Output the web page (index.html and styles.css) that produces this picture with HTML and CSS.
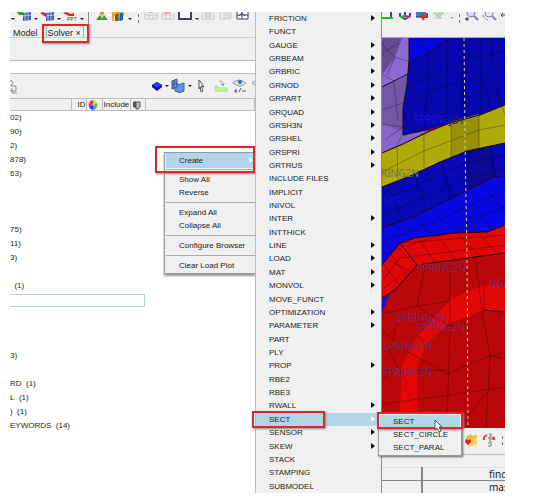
FILE: index.html
```html
<!DOCTYPE html>
<html lang="en">
<head>
    <meta charset="UTF-8">
    <meta name="viewport" content="width=device-width, initial-scale=1.0">
    <title>Solver Browser</title>
    <link rel="stylesheet" href="styles.css">
</head>
<body>
    <div class="app">
        <!-- Solver browser -->
        <div class="browser">
            <div class="toolbar main-toolbar">
                <span class="caret"></span>
                <button class="tool" aria-label="Import"><svg width="15" height="13" viewBox="0 0 15 13"><path d="M0 0h6v3H2z" fill="#24a624"/><path d="M6 1l8-1v8l-8 1z" fill="#4656a8"/><path d="M8 1v8M11 0v8M6 4l8-1" stroke="#b8c2ea" stroke-width="1"/></svg></button>
                <span class="caret"></span>
                <button class="tool" aria-label="Export"><svg width="15" height="13" viewBox="0 0 15 13"><path d="M0 1l3-1 4 2-1 3z" fill="#dd2525"/><path d="M6 1l8-1v8l-8 1z" fill="#4656a8"/><path d="M8 1v8M11 0v8M6 4l8-1" stroke="#b8c2ea" stroke-width="1"/></svg></button>
                <span class="caret"></span>
                <button class="tool" aria-label="Export PPT"><svg width="15" height="13" viewBox="0 0 15 13"><path d="M0 1l3-1 5 2 3-1v3L6 4z" fill="#dd2525"/><text x="4" y="9" class="ppt">PPT</text></svg></button>
                <span class="caret"></span>
                <span class="divider"></span>
                <button class="tool user" aria-label="User profiles"><svg width="15" height="13" viewBox="0 0 15 13"><path d="M2 8l4-5h4l4 5z" fill="#2f9a48"/><circle cx="8" cy="1" r="2" fill="#c98b3a"/><path d="M6 3l2 4 2-4z" fill="#e6d37a"/></svg></button>
                <button class="tool" aria-label="Library"><svg width="15" height="13" viewBox="0 0 15 13"><path d="M1 0h12v4H3v5H1z" fill="#eea72b"/><path d="M4 9V3l3-2v8z" fill="#c5331e"/><path d="M7 9V2h2v7z" fill="#53b847"/><path d="M9 9V1h3v7z" fill="#2c59c9"/></svg></button>
                <span class="caret"></span>
                <span class="grip"></span>
                <button class="tool" aria-label="New page"><svg width="15" height="13" viewBox="0 0 15 13"><path d="M1 0v7h12V0M1 3h12M5 3v4M9 3v4" fill="none" stroke="#c5c8c5"/><path d="M4 0h5" stroke="#a9c0a0" stroke-width="2"/></svg></button>
                <button class="tool" aria-label="Delete page"><svg width="15" height="13" viewBox="0 0 15 13"><path d="M1 0v7h12V0M1 3h12M5 3v4M9 3v4" fill="none" stroke="#cdc9ce"/><path d="M3 1h7" stroke="#efaaa6" stroke-width="2"/></svg></button>
                <button class="tool" aria-label="Page layout"><svg width="15" height="13" viewBox="0 0 15 13"><path d="M1 0v7h12V0" fill="#fff" stroke="#41415f" stroke-width="2"/></svg></button>
                <span class="caret"></span>
                <button class="tool" aria-label="Previous page"><svg width="15" height="13" viewBox="0 0 15 13"><path d="M1 0v7h12V0M4 1h6v4H4zM6 1v4M8 1v4" fill="none" stroke="#c2c5d0"/></svg></button>
                <button class="tool" aria-label="Next page"><svg width="15" height="13" viewBox="0 0 15 13"><path d="M2 0v7h11V0M6 1h5v5H6zM6 3h5" fill="none" stroke="#c8c9cf"/></svg></button>
                <button class="tool" aria-label="Swap windows"><svg width="15" height="13" viewBox="0 0 15 13"><path d="M2 0v7h11V0M7 0v7M2 3h11" fill="#fff" stroke="#3d3d5c" stroke-width="1"/><path d="M4 4l3-3 3 3" fill="none" stroke="#3d3d5c" stroke-width="1"/></svg></button>
            </div>
            <div class="tabs">
                <button class="tab">Model</button>
                <button class="tab active">Solver <span>×</span></button>
            </div>
            <div class="filter"></div>
            <div class="toolbar browser-toolbar">
                <button class="tool sort" aria-label="Sort"><svg width="10" height="18" viewBox="0 0 10 18"><path d="M0 4h2l1 2-3 3M1 9h5v5H2v-3M0 13l3 3h4" fill="none" stroke="#8b96a2"/></svg></button>
                <button class="tool" aria-label="Elements"><svg width="12" height="18" viewBox="0 0 12 18"><path d="M1 8l5-3 5 3v2l-5 4-5-4z" fill="#0808b0"/><path d="M1 8l5-3 5 3-5 3z" fill="#3434e8"/></svg></button>
                <span class="caret"></span>
                <button class="tool" aria-label="Surfaces"><svg width="15" height="18" viewBox="0 0 15 18"><path d="M4 6q4 3 9 0v8q-4 3-9 0z" fill="#5c97e8" stroke="#2860a8"/><path d="M1 4l5-2v8l-5 2z" fill="#7790cf" stroke="#3a4c8c"/><path d="M1 8l5-2M3 3v8" stroke="#3a4c8c"/></svg></button>
                <span class="caret"></span>
                <button class="tool pointer" aria-label="Select"><svg width="10" height="18" viewBox="0 0 10 18"><path d="M2 3l5 7-3-1 2 5-2 1-1-5-1 2z" fill="#fff" stroke="#555"/></svg></button>
                <button class="tool" aria-label="Isolate"><svg width="14" height="18" viewBox="0 0 14 18"><path d="M1 14V9h2l1 2h9v3z" fill="#f5f03e" stroke="#7cdde2"/><path d="M5 4q4 0 4 5M7 7l2 2 1-3" fill="none" stroke="#a39494"/></svg></button>
                <button class="tool" aria-label="Show or hide"><svg width="15" height="18" viewBox="0 0 15 18"><path d="M1 6q6-6 13 0-6 6-13 0z" fill="#dde3e9" stroke="#8c96a0"/><circle cx="8" cy="5" r="2" fill="#47678a"/><path d="M2 14h3M4 12v4M7 15l2-4M10 14h4" stroke="#555"/></svg></button>
                <button class="tool" aria-label="Show"><svg width="15" height="18" viewBox="0 0 15 18"><path d="M1 6q6-6 13 0-6 6-13 0z" fill="#dde3e9" stroke="#8c96a0"/><circle cx="7" cy="5" r="2" fill="#47678a"/></svg></button>
            </div>
            <table class="tree">
                <colgroup>
                    <col class="col-name"><col class="col-id"><col class="col-color"><col class="col-include"><col class="col-card"><col>
                </colgroup>
                <thead>
                    <tr>
                        <th></th>
                        <th class="id">ID</th>
                        <th aria-label="Color"><svg width="10" height="10" viewBox="0 0 10 10"><path d="M5 5V0a5 5 0 0 1 4 3z" fill="#f4d71c"/><path d="M5 5l4-2a5 5 0 0 1 0 4z" fill="#54d12e"/><path d="M5 5l4 2a5 5 0 0 1-4 3z" fill="#1fb6d5"/><path d="M5 5v5a5 5 0 0 1-4-3z" fill="#2135d8"/><path d="M5 5L1 7a5 5 0 0 1 0-4z" fill="#b92bcb"/><path d="M5 5L1 3a5 5 0 0 1 4-3z" fill="#ee3a2a"/></svg></th>
                        <th>Include</th>
                        <th aria-label="Card image"><svg width="9" height="10" viewBox="0 0 9 10"><path d="M1 2l3-1v7L1 7z" fill="#555"/><path d="M4 2h4v5L6 9H4z" fill="#bbb" stroke="#555"/></svg></th>
                        <th></th>
                    </tr>
                </thead>
                <tbody>
                    <tr><td>02)</td></tr>
                    <tr><td>90)</td></tr>
                    <tr><td>2)</td></tr>
                    <tr><td>878)</td></tr>
                    <tr><td>63)</td></tr>
                    <tr><td></td></tr>
                    <tr><td></td></tr>
                    <tr><td></td></tr>
                    <tr><td>75)</td></tr>
                    <tr><td>11)</td></tr>
                    <tr><td>3)</td></tr>
                    <tr><td></td></tr>
                    <tr><td>&nbsp;&nbsp;(1)</td></tr>
                    <tr><td colspan="5"><input class="rename" type="text" aria-label="Name"></td></tr>
                    <tr><td></td></tr>
                    <tr><td></td></tr>
                    <tr><td></td></tr>
                    <tr><td>3)</td></tr>
                    <tr><td></td></tr>
                    <tr><td>RD&nbsp; (1)</td></tr>
                    <tr><td>L&nbsp; (1)</td></tr>
                    <tr><td>)&nbsp; (1)</td></tr>
                    <tr><td>EYWORDS&nbsp; (14)</td></tr>
                </tbody>
            </table>

            <!-- Right click menu -->
            <div class="context-menu">
                <div class="group"><button class="selected more">Create</button></div>
                <div class="group"><button>Show All</button><button>Reverse</button></div>
                <div class="group"><button>Expand All</button><button>Collapse All</button></div>
                <div class="group"><button>Configure Browser</button></div>
                <div class="group"><button>Clear Load Plot</button></div>
            </div>
            <div class="mark mark-tab"></div>
            <div class="mark mark-create"></div>
        </div>

        <!-- Create menu -->
        <ul class="create-menu">
            <li><button class="more">FRICTION</button></li>
            <li><button>FUNCT</button></li>
            <li><button class="more">GAUGE</button></li>
            <li><button class="more">GRBEAM</button></li>
            <li><button class="more">GRBRIC</button></li>
            <li><button class="more">GRNOD</button></li>
            <li><button class="more">GRPART</button></li>
            <li><button class="more">GRQUAD</button></li>
            <li><button class="more">GRSH3N</button></li>
            <li><button class="more">GRSHEL</button></li>
            <li><button class="more">GRSPRI</button></li>
            <li><button class="more">GRTRUS</button></li>
            <li><button>INCLUDE FILES</button></li>
            <li><button>IMPLICIT</button></li>
            <li><button>INIVOL</button></li>
            <li><button class="more">INTER</button></li>
            <li><button>INTTHICK</button></li>
            <li><button class="more">LINE</button></li>
            <li><button class="more">LOAD</button></li>
            <li><button class="more">MAT</button></li>
            <li><button class="more">MONVOL</button></li>
            <li><button>MOVE_FUNCT</button></li>
            <li><button class="more">OPTIMIZATION</button></li>
            <li><button class="more">PARAMETER</button></li>
            <li><button>PART</button></li>
            <li><button>PLY</button></li>
            <li><button class="more">PROP</button></li>
            <li><button>RBE2</button></li>
            <li><button>RBE3</button></li>
            <li><button class="more">RWALL</button></li>
            <li>
                <button class="more selected">SECT</button>
                <div class="mark mark-sect"></div>
                <div class="submenu">
                    <button class="selected">SECT</button>
                    <button>SECT_CIRCLE</button>
                    <button>SECT_PARAL</button>
                    <div class="mark mark-sub"></div>
                    <svg class="cursor" width="10" height="14" viewBox="0 0 10 14"><path d="M1 1v10l2-2 2 4 2-1-2-4h3z" fill="#fff" stroke="#555"/></svg>
                </div>
            </li>
            <li><button class="more">SENSOR</button></li>
            <li><button class="more">SKEW</button></li>
            <li><button>STACK</button></li>
            <li><button>STAMPING</button></li>
            <li><button>SUBMODEL</button></li>
        </ul>

        <!-- Graphics area -->
        <div class="graphics">
            <div class="toolbar view-toolbar">
                <button class="tool" aria-label="Fit"><svg width="13" height="13" viewBox="0 0 13 13"><path d="M9 0v6" stroke="#3b3bc4" stroke-width="2"/><path d="M0 6h11" stroke="#20b820" stroke-width="2"/></svg></button>
                <button class="tool" aria-label="Axes"><svg width="14" height="13" viewBox="0 0 14 13"><path d="M7 0v4M2 1v3l5 3 5-3V1" fill="none" stroke="#4040bc" stroke-width="2"/><path d="M7 4L2 5" stroke="#2cb32c" stroke-width="2"/><path d="M7 4l5 1" stroke="#d53434" stroke-width="2"/></svg></button>
                <button class="tool" aria-label="Capture"><svg width="14" height="13" viewBox="0 0 14 13"><path d="M1 0h10v5H1z" fill="#3a7cc2"/><path d="M1 5h9" stroke="#263f66"/><path d="M12 1v4H7l2-2M7 5l2 3" fill="none" stroke="#e02626" stroke-width="2"/></svg></button>
                <button class="tool" aria-label="Record"><svg width="14" height="13" viewBox="0 0 14 13"><path d="M1 0h11v3H1z" fill="#cdd3cd"/><path d="M4 2h5v5H4z" fill="#b4d3b4"/><path d="M1 6h10" stroke="#ccc"/></svg></button>
                <span class="caret faint"></span>
                <span class="grip"></span>
                <button class="tool" aria-label="Zoom"><svg width="15" height="13" viewBox="0 0 15 13"><circle cx="7" cy="1" r="4" fill="#d5dcf4" stroke="#7d7ca8"/><path d="M10 4l4 4" stroke="#7d7ca8" stroke-width="2"/><path d="M1 7h4M3 5v4" stroke="#333"/></svg></button>
                <button class="tool" aria-label="Zoom area"><svg width="15" height="13" viewBox="0 0 15 13"><circle cx="7" cy="1" r="4" fill="#e3e6f0" stroke="#8986aa"/><path d="M10 4l4 4" stroke="#8986aa" stroke-width="2"/><path d="M1 3q1 4 5 5" fill="none" stroke="#777" stroke-dasharray="2 1"/></svg></button>
                <button class="tool" aria-label="Pan"><svg width="15" height="13" viewBox="0 0 15 13"><path d="M1 3h13M7 0v8M3 1L1 3l2 2M5 6l2 2 2-2" fill="none" stroke="#45457e" stroke-width="1"/></svg></button>
            </div>
            <svg class="model" viewBox="382 38 123 390" preserveAspectRatio="xMinYMin slice">
                <rect x="382" y="38" width="123" height="390" fill="#b90707"/>
                <!-- purple part -->
                <path d="M382 38h28l-1 22-2 25-4 22v27l29-6-29 16-21 9z" fill="#7458a8"/>
                <path d="M402 38h8l-1 22v15l-27 12V74l12-15z" fill="#8d68ce"/>
                <path d="M382 38h20l-8 21-12 15z" fill="#674a92"/>
                <path d="M382 124l21 8v4l25-5-25 12-21 9z" fill="#8a66c8"/>
                <!-- upper blue part -->
                <path d="M409 38h96v67l-25 10-30 8-20 6-27 6v-27l4-23 2-25z" fill="#0707ad"/>
                <path d="M409 38h41l-21 15-20 9z" fill="#0505df"/>
                <!-- yellow part -->
                <path d="M382 153l21-9 27-13 20-8 30-8 25-10v38l-38 8-27 11-30 14-28 11z" fill="#afa909"/>
                <path d="M451 122l28-8v34l-12 3-16 7z" fill="#979008"/>
                <!-- middle blue parts -->
                <path d="M382 187l28-11 30-14 27-11 38-8v32l-10 1-30 15-50 25-33 12z" fill="#0808b4"/>
                <path d="M467 151l24-5 4 30-28 15z" fill="#0a0a96"/>
                <path d="M382 228l33-12 50-25 30-15h10v50l-18 6-32 1-40 5-15 5-18 22z" fill="#0808e2"/>
                <!-- red parts -->
                <path d="M382 265l18-22 15-5 40-5 32-1 18-7v28l-30 4-58 8-22 25-13 8z" fill="#e00707"/>
                <path d="M382 299l8-5-8 18z" fill="#1010c8"/>
                <path d="M505 285h-22l-33 15-32 35-16 30-3 63h18v-58l8-25 22-20 36-15 22 2z" fill="#e20808"/>
                <!-- mesh outlines -->
                <g class="edges">
                    <path d="M409 38v22l-2 25-4 22v28l27-6M409 62l20-9 21-14M382 87l26-13M382 153l21-9 27-13 20-8 30-8 25-10M382 187l28-11 30-14 27-11 38-8M382 228l33-12 50-25 30-15h10M382 265l18-22 15-5 40-5 32-1 18-7M505 253l-30 4-58 8-22 25-13 8M505 312l-22-2M400 243l17 22"/>
                </g>
                <g class="mesh">
                    <path d="M382 43l5 7 12-7M387 50l8 7 13 4M382 55l5-5M395 57l-8 18M382 74l12 7M394 82l4 39M382 110l21-7M382 124l21 3M385 140l18-13M397 146l6-14"/>
                    <path d="M429 53l-1 25-3 50M447 38v85M463 38v23l-2 58M481 38v76M429 53l-10-15M409 87l54-26 42-10M407 105l22-14 34-10 42-13M484 82l7 28M491 38v30M494 85l11 30"/>
                    <path d="M397 147l1 33M424 134v34M451 123v36M479 115v33M382 172l42-21 55-21 26-5"/>
                    <path d="M388 185l14 36M414 174l13 36M442 161l8 37M467 151l3 39M491 146l4 30M382 200l32-14 53-23 38-8M382 215l32-13 53-24 38-9"/>
                    <path d="M393 224l19 15M412 217l24 20M430 208l25 25M449 199l26 33M465 191l27 39M482 183l23 30M382 242l44-17 79-35M382 254l62-20 61-28M495 176l10 8"/>
                    <path d="M418 238l17 24M438 235l18 25M457 233l22 23M478 232l18 21M400 243l105-8M387 259l22 12M391 254l16 23M384 265l16 21M382 281l18-23 105-13M382 289l24-17"/>
                    <path d="M425 264l-8 42-35 8M450 261v66l-3 101M475 257l7 53 8 46-4 72M382 330l26 22 40 22 30-14 27-8M417 306l33-5M417 306l33 20M398 323l-9 28 18 32M382 380l15-12M382 404l67-9 56-8M489 355l16 4M487 392l-25 32M417 370h31M399 412h18M484 285v25M418 335l7 10"/>
                </g>
                <g class="labels">
                    <text x="414" y="123" fill="#1717d5">SPRING</text>
                    <text x="449" y="124" fill="#24206d">JDY</text>
                    <text x="381" y="177" fill="#777249">RING2N</text>
                    <text x="384" y="204" fill="#1010cf">SPR</text>
                    <text x="417" y="272">SPRING2N</text>
                    <text x="396" y="321">SPRING2N</text>
                    <text x="416" y="331">SPRING2N</text>
                    <text x="383" y="350">SPRING2N</text>
                    <text x="383" y="376">SPRING2N</text>
                    <text x="489" y="287">NG2</text>
                </g>
                <path class="axis" d="M464 38l1 100 2 120 1 170"/>
            </svg>
            <div class="toolbar bottom-toolbar">
                <button class="tool" aria-label="Favorites"><svg width="15" height="15" viewBox="0 0 15 15"><path d="M3 3l4-2 1 2 5-1v9l-8 3-4-6z" fill="#f0b638"/><path d="M4 7l9-3v7l-8 3z" fill="#f8d16c"/><path d="M2 6l3 1 2-1v3l-3 3-3-3z" fill="#de281a"/></svg></button>
                <button class="tool" aria-label="Renumber"><svg width="15" height="15" viewBox="0 0 15 15"><path d="M7 1h2v3H7v2h3M7 8h2v5H6M8 10H6" fill="none" stroke="#777"/><path d="M2 4l3-2M2 4v3M12 4l-2 2M12 4v3" stroke="#d84848" stroke-width="2"/></svg></button>
                <span class="grip"></span>
            </div>
            <table class="panel">
                <tr><td class="key"></td><td>find</td></tr>
                <tr><td class="key"></td><td>mask</td></tr>
            </table>
        </div>
    </div>
</body>
</html>
```

FILE: styles.css
```css
* {
    box-sizing: border-box;
}
body {
    margin: 0;
    background-color: #fff;
    font-family: "Liberation Sans", Arial, sans-serif;
    font-size: 8px;
    color: #222;
}
button {
    font: inherit;
    color: inherit;
    background: none;
    border: none;
    padding: 0;
    text-align: left;
}
svg {
    display: block;
}
.app {
    display: grid;
    grid-template-columns: 245px 127px minmax(0, 1fr);
    height: calc(100vh - 19px);
    margin: 12px 32px 7px 10px;
    overflow: hidden;
}

/* toolbars */
.toolbar {
    display: flex;
    align-items: center;
    background-color: #f0f0f0;
    overflow: hidden;
}
.tool {
    flex: none;
}
.caret {
    flex: none;
    margin: 0 2px;
    border: 2px solid transparent;
    border-top-color: #222;
    border-bottom: none;
}
.caret.faint {
    border-top-color: #aaa;
}
.divider {
    flex: none;
    width: 1px;
    height: 13px;
    margin: 0 4px 0 2px;
    background-color: #888;
}
.grip {
    flex: none;
    height: 9px;
    margin: 0 4px;
    border-left: 1px dashed #777;
}
.main-toolbar {
    height: 13px;
    gap: 1px;
}
.main-toolbar .caret {
    margin: 0 1px;
}
.main-toolbar .tool + .tool {
    margin-left: 1px;
}
.ppt {
    font-size: 5px;
    fill: #444;
}

/* solver browser */
.browser {
    position: relative;
    display: flex;
    flex-direction: column;
    min-width: 0;
    background-color: #fff;
}
.tabs {
    display: flex;
    height: 13px;
    background-color: #f0f0f0;
    font-size: 9px;
    border-bottom: 1px solid #ccc;
}
.tab {
    padding: 2px 4px 0 3px;
    line-height: 12px;
}
.tab.active {
    margin-left: 4px;
    padding: 2px 2px 0 1px;
    border-left: 1px solid #aaa;
    border-right: 1px solid #aaa;
}
.filter {
    height: 23px;
    background-color: #f0f0f0;
    border-bottom: 1px solid #bbb;
}
.browser-toolbar {
    height: 25px;
    margin-top: 12px;
    border-top: 1px solid #bbb;
}
.browser-toolbar .sort {
    margin-right: 131px;
}
.browser-toolbar .pointer {
    margin: 0 7px 0 3px;
}
.browser-toolbar .tool:nth-last-child(-n+2) {
    margin-left: 4px;
}
.tree {
    width: 100%;
    table-layout: fixed;
    border-collapse: collapse;
}
.col-name { width: 61px; }
.col-id { width: 15px; }
.col-color { width: 16px; }
.col-include { width: 28px; }
.col-card { width: 15px; }
.tree th {
    height: 12px;
    padding: 0 0 0 1px;
    background-color: #f0f0f0;
    border: 1px solid #bbb;
    border-left: none;
    font-weight: normal;
    text-align: left;
    line-height: 10px;
}
.tree th.id {
    text-align: right;
}
.tree td {
    height: 14px;
    padding: 0;
    line-height: 14px;
    white-space: nowrap;
}
.rename {
    display: block;
    width: 100%;
    height: 13px;
    border: 1px solid #b5cbd5;
    border-left: none;
    font: inherit;
}

/* menus */
.context-menu button,
.create-menu button {
    position: relative;
    display: block;
    width: 100%;
    line-height: 13px;
    padding-left: 13px;
    white-space: nowrap;
}
.selected {
    background-color: #b2d5e8;
}
.more::after {
    content: "";
    position: absolute;
    right: 6px;
    top: 3px;
    border: 3px solid transparent;
    border-left: 4px solid #111;
    border-right: none;
}
.more.selected::after {
    border-left-color: #fff;
}
.context-menu {
    position: absolute;
    top: 140px;
    left: 154px;
    right: 0;
    padding-left: 1px;
    background-color: #f0f0f0;
    border: 1px solid #999;
    border-right: none;
    box-shadow: 0 2px 2px #999;
}
.context-menu .group {
    padding: 3px 0;
    border-bottom: 1px solid #aaa;
}
.context-menu .group:first-child {
    padding: 0 0 1px;
}
.context-menu .group:first-child button {
    line-height: 15px;
}
.context-menu .group:last-child {
    padding-bottom: 1px;
    border-bottom: none;
}
.context-menu .more::after {
    right: 2px;
    top: 4px;
}
.create-menu {
    z-index: 2;
    display: flex;
    flex-direction: column;
    margin: 0;
    padding: 0;
    list-style: none;
    background-color: #f0f0f0;
    border-left: 1px solid #bbb;
    border-right: 1px solid #888;
}
.create-menu li {
    position: relative;
    flex: 1;
}
.submenu {
    position: absolute;
    top: 0;
    left: 122px;
    width: 84px;
    padding: 1px;
    background-color: #f0f0f0;
    border: 1px solid #999;
    box-shadow: 1px 1px 2px #666;
}
.mark {
    position: absolute;
    border: 2px solid #d92a2a;
    box-shadow: 1px 1px 2px #888;
}
.mark-tab {
    left: 32px;
    top: 12px;
    width: 47px;
    height: 19px;
}
.mark-create {
    left: 145px;
    top: 134px;
    right: 0;
    height: 27px;
}
.mark-sect {
    top: -2px;
    left: -4px;
    width: 73px;
    height: 17px;
}
.mark-sub {
    top: -2px;
    left: -2px;
    right: -2px;
    height: 17px;
}
.cursor {
    position: absolute;
    top: 5px;
    left: 55px;
}

/* graphics area */
.graphics {
    display: flex;
    flex-direction: column;
    min-width: 0;
    background-color: #f0f0f0;
    overflow: hidden;
}
.view-toolbar {
    height: 26px;
    padding-bottom: 13px;
    gap: 3px;
    border-bottom: 1px solid #35d6e6;
}
.view-toolbar .caret,
.view-toolbar .grip {
    margin: 0 1px;
}
.model {
    flex: 1;
    width: 100%;
    min-height: 0;
}
.edges {
    fill: none;
    stroke: #1c0712;
    stroke-width: 1;
}
.mesh {
    fill: none;
    stroke: #000;
    stroke-opacity: 0.28;
    stroke-width: 1;
}
.labels {
    font-family: "Noto Sans", "Open Sans", sans-serif;
    font-size: 10px;
    fill: #7b2a70;
}
.axis {
    fill: none;
    stroke: #e3d27c;
    stroke-width: 1;
    stroke-dasharray: 3 3;
}
.bottom-toolbar {
    height: 27px;
    padding-left: 82px;
    gap: 3px;
    border-bottom: 1px solid #bbb;
}
.bottom-toolbar .grip {
    margin: 0 2px;
}
.panel {
    width: 100%;
    height: 26px;
    margin-top: 12px;
    table-layout: fixed;
    border-collapse: collapse;
    font-family: "Noto Sans", "Open Sans", sans-serif;
    font-size: 10px;
}
.panel td {
    height: 13px;
    padding: 0 0 0 66px;
    border-top: 1px solid #888;
    line-height: 12px;
    white-space: nowrap;
    overflow: hidden;
}
.panel tr:first-child td {
    border-top-color: #ddd;
}
.panel .key {
    width: 40px;
    padding: 0;
    border-right: 2px solid #888;
}
```
